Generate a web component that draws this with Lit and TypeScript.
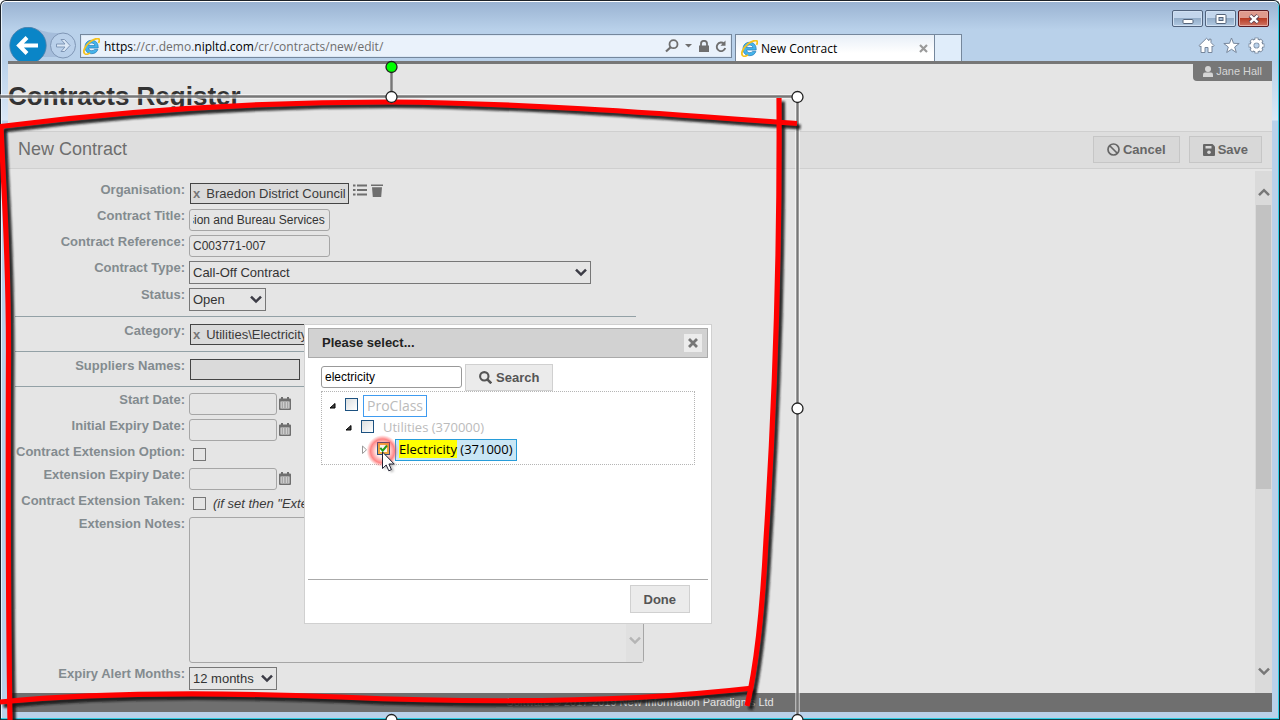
import { LitElement, html, css, svg, nothing } from "lit";
import { customElement, property, query } from "lit/decorators.js";
import { classMap } from "lit/directives/class-map.js";

const ieLogo = html`<svg width="17" height="17" viewBox="0 0 17 17" aria-hidden="true">
  <path d="M15.200 10H5.600c.2 1.800 1.500 2.700 3.200 2.700 1.200 0 2.100-.5 2.600-1.300h3.500c-.9 2.700-3.200 4.300-6.200 4.300-4 0-6.700-2.700-6.700-6.700 0-4 2.700-6.700 6.700-6.700 4.200 0 6.700 3 6.500 7.700zM11.800 7.600C11.700 6 10.500 5 8.700 5 7 5 5.800 6 5.600 7.600z" fill="#45b4ea" stroke="#1f78b8" stroke-width=".7"/>
  <path d="M2 15.900C-.8 13.600 2 8 7 3.900 11 .8 15.400-.4 16.200 1.300c.4 1 .1 2.200-.7 3.600" fill="none" stroke="#f5c21c" stroke-width="1.800"/>
  <path d="M2 15.900c1.300.9 3.200.2 5-1" fill="none" stroke="#f5c21c" stroke-width="1.600"/>
</svg>`;

const chevron = (color: string, up = false) => html`<svg width="12" height="9" viewBox="0 0 12 9" aria-hidden="true">
  <path d=${up ? "M1 7.200L6 2.200l5 5" : "M1 1.600L6 6.600l5-5"} fill="none" stroke=${color} stroke-width="2.500"/>
</svg>`;

const calendar = html`<svg width="12" height="14" viewBox="0 0 12 14" aria-hidden="true">
  <path d="M2 0h2v1.500h4V0h2v1.500h1q1 0 1 1V12q0 1-1 1H1q-1 0-1-1V2.500q0-1 1-1h1z" fill="#6f6f6f"/>
  <path d="M1.500 4.500h9v7h-9z" fill="#e0e0e0"/>
  <path d="M2.500 6h7M2.500 8h7M2.500 10h7" stroke="#6f6f6f" stroke-width="1.200" stroke-dasharray="1.800 .8"/>
</svg>`;

const teeth = Array.from({ length: 8 }, (_, i) => i * 45);

@customElement("browser-chrome")
class BrowserChrome extends LitElement {
  static styles = css`
    :host { display: flex; align-items: flex-end; height: 61px; font: 12px "Open Sans", "Noto Sans", sans-serif; }
    svg { display: block; flex: none; }
    button { padding: 0; border: 0; background: none; }
    .nav { display: flex; width: 72px; flex: none; }
    .address { display: flex; align-items: center; gap: 4px; box-sizing: border-box; flex: 0 1 652px; min-width: 0; height: 24px; margin-bottom: 3px; padding: 0 4px 0 2px; border: 1px solid #75879c; outline: 1px solid #dbe8f6; outline-offset: -2px; background: #eaf2fb; color: #6d6d6d; white-space: nowrap; }
    .url { flex: 1; overflow: hidden; }
    .url b { color: #000; font-weight: 400; }
    .tools { display: flex; align-items: center; gap: 6px; }
    .tab { display: flex; align-items: center; gap: 3px; box-sizing: border-box; width: 200px; height: 27px; margin-left: 3px; padding: 0 6px 0 5px; border: 1px solid #75879c; border-bottom: 0; background: linear-gradient(#e8eff7, #fff 70%); color: #000; white-space: nowrap; }
    .tab span { flex: 1; }
    .stub { box-sizing: border-box; width: 27px; height: 27px; border: 1px solid #75879c; border-width: 1px 1px 0 0; background: #e0edfa; }
    .side { display: flex; flex-direction: column; align-items: flex-end; gap: 10px; margin-left: auto; padding: 0 3px 7px 0; }
    .controls { display: flex; gap: 2px; }
    .control { display: grid; place-items: center; box-sizing: border-box; width: 31px; height: 17px; border: 1px solid #51637d; border-radius: 2px; background: linear-gradient(#c3d6ec 45%, #93adc9 50%, #b1c9e2); box-shadow: inset 0 0 0 1px #d0e0f2; }
    .close { border-color: #5a1a22; background: linear-gradient(#df9a8d 45%, #b83b24 50%, #cf7564); box-shadow: inset 0 0 0 1px #e6aaa0; }
    .links { display: flex; gap: 8px; padding-right: 4px; }
  `;
  render() {
    return html`
      <div class="nav">
        <svg width="72" height="34" viewBox="0 0 72 34" role="img" aria-label="Back and forward">
          <path d="M20 0c12 1 14 6 30 6v24H20z" fill="#a5bddb"/>
          <circle cx="55" cy="18.500" r="12.500" fill="#b9d0ea" stroke="#7f96b5"/>
          <path d="M48.500 17h8.500l-4-4.500h3.500l5.500 6-5.500 6H53l4-4.500h-8.500z" fill="#dbe8f6" stroke="#7f96b5"/>
          <circle cx="20" cy="18.500" r="18.200" fill="#0a85c7" stroke="#4e7fa8" stroke-width=".8"/>
          <path d="M30 18.500H12M19 10.500l-8 8 8 8" fill="none" stroke="#fff" stroke-width="4"/>
        </svg>
      </div>
      <div class="address">
        ${ieLogo}
        <div class="url"><b>https</b>://cr.demo.<b>nipltd.com</b>/cr/contracts/new/edit/</div>
        <div class="tools">
          <svg width="14" height="14" viewBox="0 0 14 14"><circle cx="8.500" cy="5.200" r="4" fill="none" stroke="#6f6f6f" stroke-width="1.800"/><path d="M5.600 8.200L1 12.500" stroke="#6f6f6f" stroke-width="2.200"/></svg>
          <svg width="8" height="4" viewBox="0 0 8 4"><path d="M0 0h7L3.500 3.500z" fill="#6f6f6f"/></svg>
          <svg width="10" height="13" viewBox="0 0 10 13"><path d="M0 5.500h10V12H0z" fill="#6f6f6f"/><path d="M2 6V3.800a3 3 0 016 0V6" fill="none" stroke="#6f6f6f" stroke-width="1.800"/></svg>
          <svg width="12" height="13" viewBox="0 0 12 13"><path d="M9 3.700A4.300 4.300 0 1010.200 8" fill="none" stroke="#6f6f6f" stroke-width="1.900"/><path d="M10.500.5v5.200H5.500z" fill="#6f6f6f"/></svg>
        </div>
      </div>
      <div class="tab">
        ${ieLogo}<span>New Contract</span>
        <button aria-label="Close tab"><svg width="9" height="9" viewBox="0 0 9 9"><path d="M1 1l7 7M8 1L1 8" stroke="#9a9a9a" stroke-width="2.200"/></svg></button>
      </div>
      <div class="stub"></div>
      <div class="side">
        <div class="controls">
          <button class="control" aria-label="Minimise"><svg width="12" height="12" viewBox="0 0 12 12"><rect x="1" y="6.500" width="10" height="4" rx="1" fill="#fff" stroke="#55647a"/></svg></button>
          <button class="control" aria-label="Maximise"><svg width="12" height="12" viewBox="0 0 12 12"><rect x="1" y="1.500" width="10" height="9" rx="1" fill="#fff" stroke="#55647a"/><rect x="4" y="4.500" width="4" height="3" fill="#a8bdd6" stroke="#55647a"/></svg></button>
          <button class="control close" aria-label="Close"><svg width="12" height="12" viewBox="0 0 12 12"><path d="M2 2.500l8 7M10 2.500l-8 7" stroke="#5b4050" stroke-width="4.200"/><path d="M2.300 2.700l7.400 6.600M9.700 2.700L2.300 9.300" stroke="#fff" stroke-width="2.400"/></svg></button>
        </div>
        <div class="links">
          <svg width="17" height="17" viewBox="0 0 17 17"><path d="M8.500 1.300l2.500 2.400V2.200h2v3.400l3 3-1 1.200-1-.8v6.500h-4v-5H7v5H3V9l-1 .8-1-1.200z" fill="#fff" stroke="#76869b"/></svg>
          <svg width="17" height="17" viewBox="0 0 17 17"><path d="M8.500 1l2 5.300 5.700.2-4.500 3.500 1.600 5.500-4.800-3.200-4.800 3.200L5.300 10 .8 6.500l5.700-.2z" fill="#fff" stroke="#76869b"/></svg>
          <svg width="17" height="17" viewBox="0 0 17 17">
            ${teeth.map((a) => svg`<path d="M8.500 .6v4" stroke="#76869b" stroke-width="4" transform="rotate(${a} 8.500 8.500)"/>`)}
            <circle cx="8.500" cy="8.500" r="4.600" fill="none" stroke="#76869b" stroke-width="4.600"/>
            ${teeth.map((a) => svg`<path d="M8.500 1.300v4" stroke="#fff" stroke-width="2.400" transform="rotate(${a} 8.500 8.500)"/>`)}
            <circle cx="8.500" cy="8.500" r="4.500" fill="none" stroke="#fff" stroke-width="2.800"/>
          </svg>
        </div>
      </div>`;
  }
}

@customElement("contract-form")
class ContractForm extends LitElement {
  @query("#title") titleBox!: HTMLInputElement;
  static styles = css`
    :host { display: block; font: 13px "Liberation Sans", Arial, sans-serif; color: #3a3a3a; }
    svg { display: block; flex: none; }
    .form { max-width: 629px; padding: 14px 0 3px 7px; }
    .section { display: grid; gap: 4px; margin-right: 8px; padding: 7px 0 5px; border-bottom: 1px solid #93a1a6; }
    .section:first-child { padding-top: 0; }
    .section:last-child { padding: 6px 0 0; border-bottom: 0; margin-right: 0; }
    .row { display: grid; grid-template-columns: 170px minmax(0, 1fr); gap: 4px; min-height: 22px; }
    .tick { min-height: 19px; }
    .label { justify-self: end; line-height: 14px; font-weight: 700; color: #838b8f; white-space: nowrap; }
    .field { display: flex; align-items: flex-start; gap: 2px; min-width: 0; }
    .tick .field { align-items: center; gap: 7px; padding-left: 4px; white-space: nowrap; font-style: italic; }
    input, select, textarea { box-sizing: border-box; margin: 0; border: 1px solid #a6a6a6; border-radius: 3px; background: #e5e5e5; color: #333; font: 12px "Liberation Sans", Arial, sans-serif; }
    .text { width: 141px; height: 22px; padding: 0 4px 1px 3px; }
    .date { width: 88px; }
    .box { appearance: none; width: 13px; height: 13px; border: 1px solid #777; border-radius: 0; }
    .pick { display: grid; align-items: center; justify-items: end; }
    .pick select { grid-area: 1 / 1; appearance: none; height: 23px; padding: 0 3px; border-color: #777; border-radius: 0; font-size: 13px; width: 100%; }
    .pick svg { grid-area: 1 / 1; margin-right: 4px; pointer-events: none; }
    .wide { width: 402px; }
    .short { width: 77px; }
    .months { width: 88px; }
    .chip { display: flex; align-items: center; gap: 6px; box-sizing: border-box; height: 21px; min-width: 110px; margin: 0 2px 0 1px; padding: 0 2px; border: 1px solid #444; background: #dadada; white-space: nowrap; }
    .cat { min-width: 150px; }
    button { padding: 0; border: 0; background: none; color: #777; font: 700 13px "Liberation Sans", Arial, sans-serif; }
    .act { margin: 1px 2px 0 0; }
    .cal { margin-top: 4px; }
    .notes { display: grid; width: 455px; justify-items: end; }
    .notes textarea { grid-area: 1 / 1; width: 100%; height: 146px; resize: none; }
    .bar { grid-area: 1 / 1; display: flex; align-items: flex-end; justify-content: center; width: 17px; margin: 1px; padding-bottom: 17px; box-sizing: border-box; background: #e0e0e0; }
  `;
  firstUpdated() {
    this.titleBox.scrollLeft = this.titleBox.scrollWidth;
  }
  private row(id: string, label: string, field: unknown, tick = false) {
    return html`<div class=${classMap({ row: true, tick })}><label class="label" for=${id}>${label}</label><div class="field">${field}</div></div>`;
  }
  private date(id: string) {
    return html`<input class="text date" id=${id}><button class="cal" aria-label="Choose date">${calendar}</button>`;
  }
  private select(id: string, size: string, value: string) {
    return html`<div class="pick ${size}"><select id=${id}><option>${value}</option></select>${chevron("#3c3c46")}</div>`;
  }
  render() {
    return html`<form class="form">
      <div class="section">
        ${this.row("org", "Organisation:", html`<div class="chip"><button id="org" type="button">x</button>Braedon District Council</div>
          <button class="act" type="button" aria-label="List"><svg width="14" height="12" viewBox="0 0 14 12"><path d="M4 1.500h10M4 6h10M4 10.500h10M0 1.500h2.500M0 6h2.500M0 10.500h2.500" stroke="#6f6f6f" stroke-width="1.800"/></svg></button>
          <button class="act" type="button" aria-label="Delete"><svg width="12" height="13" viewBox="0 0 12 13"><path d="M0 .5h12V2H0zM1 3.200h10l-.8 9.800H1.800z" fill="#6f6f6f"/></svg></button>`)}
        ${this.row("title", "Contract Title:", html`<input class="text" id="title" .value=${"Electricity Provision and Bureau Services"}>`)}
        ${this.row("ref", "Contract Reference:", html`<input class="text" id="ref" .value=${"C003771-007"}>`)}
        ${this.row("type", "Contract Type:", this.select("type", "wide", "Call-Off Contract"))}
        ${this.row("status", "Status:", this.select("status", "short", "Open"))}
      </div>
      <div class="section">
        ${this.row("category", "Category:", html`<div class="chip cat"><button id="category" type="button">x</button>Utilities\\Electricity</div>`)}
      </div>
      <div class="section">
        ${this.row("suppliers", "Suppliers Names:", html`<output class="chip" id="suppliers"></output>`)}
      </div>
      <div class="section">
        ${this.row("start", "Start Date:", this.date("start"))}
        ${this.row("initial", "Initial Expiry Date:", this.date("initial"))}
        ${this.row("option", "Contract Extension Option:", html`<input class="box" type="checkbox" id="option">`, true)}
        ${this.row("extension", "Extension Expiry Date:", this.date("extension"))}
        ${this.row("taken", "Contract Extension Taken:", html`<input class="box" type="checkbox" id="taken"><span>(if set then "Extension Expiry Date" is used)</span>`, true)}
        ${this.row("notes", "Extension Notes:", html`<div class="notes"><textarea id="notes"></textarea><div class="bar">${chevron("#b5b5b5")}</div></div>`)}
        ${this.row("alert", "Expiry Alert Months:", this.select("alert", "months", "12 months"))}
      </div>
    </form>`;
  }
}

interface Node { name: string; code?: string; depth: number; open: boolean; checked: boolean; look: string; }

@customElement("category-dialog")
class CategoryDialog extends LitElement {
  @property({ attribute: false }) nodes: Node[] = [
    { name: "ProClass", depth: 0, open: true, checked: false, look: "root" },
    { name: "Utilities", code: "(370000)", depth: 1, open: true, checked: false, look: "" },
    { name: "Electricity", code: "(371000)", depth: 2, open: false, checked: true, look: "hit" },
  ];
  static styles = css`
    :host { display: flex; flex-direction: column; box-sizing: border-box; width: 408px; padding: 3px; border: 1px solid #d0d0d0; background: #fff; font: 13px "Liberation Sans", Arial, sans-serif; color: #222; }
    svg { display: block; flex: none; }
    .head { display: flex; align-items: center; justify-content: space-between; box-sizing: border-box; height: 30px; padding: 0 5px 0 13px; border: 1px solid #aaa; background: #d2d2d2; }
    h2 { margin: 0; font-size: 13px; line-height: 28px; }
    .close { display: grid; place-items: center; width: 18px; height: 18px; padding: 0; border: 0; background: #ececec; }
    .body { box-sizing: border-box; min-height: 221px; padding: 6px 13px; }
    .search { display: flex; gap: 3px; }
    .query { box-sizing: border-box; width: 141px; height: 22px; margin-top: 2px; padding: 0 3px; border: 1px solid #999; border-radius: 3px; font: 12px "Liberation Sans", Arial, sans-serif; color: #000; }
    .btn { display: flex; align-items: center; gap: 4px; box-sizing: border-box; height: 27px; padding: 0 13px; border: 1px solid #d0d0d0; background: #ebebeb; color: #555; font: 700 13px "Liberation Sans", Arial, sans-serif; }
    .tree { padding: 3px 0; border: 1px dotted #b5b5b5; font: 13px "Open Sans", "Noto Sans", sans-serif; color: #bbb; }
    .node { display: flex; align-items: center; height: 22px; padding-left: calc(6px + var(--depth) * 16px); }
    .twist { margin-right: 7px; }
    .tick { display: grid; margin: 0 5px 3px 0; }
    .tick > * { grid-area: 1 / 1; }
    .box { appearance: none; box-sizing: border-box; width: 13px; height: 13px; margin: 0; border: 1px solid #1c5180; background: linear-gradient(135deg, #dcdfe0, #fff); }
    .box:checked { background: #fff; box-shadow: inset 0 0 0 2px #f0b040; }
    .mark { position: relative; pointer-events: none; }
    .label { box-sizing: border-box; height: 22px; padding: 0 3px; border: 1px solid transparent; line-height: 19px; white-space: nowrap; }
    .root { border-color: #3f9bf0; font-size: 14px; }
    .hit { border-color: #279cd9; background: #c9e6f5; color: #000; }
    .label mark { background: none; color: inherit; }
    .hit mark { background: #ff0; }
    .foot { display: flex; justify-content: flex-end; padding: 5px 18px 7px; border-top: 1px solid #aaa; }
    .done { height: 28px; }
  `;
  render() {
    return html`
      <div class="head"><h2>Please select...</h2>
        <button class="close" aria-label="Close"><svg width="10" height="10" viewBox="0 0 10 10"><path d="M1 1l8 8M9 1L1 9" stroke="#777" stroke-width="2.800"/></svg></button></div>
      <div class="body">
        <div class="search">
          <input class="query" aria-label="Search text" .value=${"electricity"}>
          <button class="btn"><svg width="13" height="13" viewBox="0 0 13 13"><circle cx="5.300" cy="5.300" r="4.200" fill="none" stroke="#555" stroke-width="2.100"/><path d="M8.300 8.300l4 4" stroke="#555" stroke-width="2.600"/></svg>Search</button>
        </div>
        <div class="tree">${this.nodes.map((n, i) => html`
          <div class="node" style="--depth:${n.depth}">
            <svg class="twist" width="10" height="10" viewBox="0 0 10 10">${n.open
              ? svg`<path d="M7 2.500v4.500H2z" fill="#444" stroke="#000"/>`
              : svg`<path d="M2.500 1v7.500l4-3.700z" fill="#fff" stroke="#999"/>`}</svg>
            <span class="tick"><input class="box" type="checkbox" id="node${i}" .checked=${n.checked}>${n.checked
              ? html`<svg class="mark" width="13" height="13" viewBox="0 0 13 13"><path d="M3.300 5.800l2.400 2.900L10 3.500" fill="none" stroke="#18a018" stroke-width="2"/></svg>` : nothing}</span>
            <label class="label ${n.look}" for="node${i}"><mark>${n.name}</mark>${n.code ? " " + n.code : nothing}</label>
          </div>`)}</div>
      </div>
      <div class="foot"><button class="btn done">Done</button></div>`;
  }
}

@customElement("app-root")
class AppRoot extends LitElement {
  static styles = css`
    :host { display: block; position: relative; overflow: hidden; height: 100vh; font: 13px "Liberation Sans", Arial, sans-serif; }
    svg { display: block; flex: none; }
    .window { display: flex; flex-direction: column; box-sizing: border-box; height: 100%; padding: 0 7px 7px; border: 1px solid #1c2229; border-bottom-color: #14404a; border-radius: 6px 6px 0 0; box-shadow: inset 0 1px #fff, inset -1px 0 #31cfe6, inset 0 -1px #31cfe6, inset 1px 0 #e8f2fb; background: linear-gradient(#9ab3d2, #b9d1ea 30px, #b9d1ea 60px, #dbe8f6 119px, #b9d1ea 120px); }
    browser-chrome { margin-top: -1px; flex: none; position: relative; background: linear-gradient(#1c2229 1px, #fff 1px, #fff 2px, #9ab3d2 2px, #b9d1ea 30px); }
    .page { display: flex; flex-direction: column; flex: 1; min-height: 0; border-top: 3px solid #777; background: #e5e5e5; }
    .head { display: flex; justify-content: space-between; align-items: flex-start; height: 67px; flex: none; }
    h1 { margin: 0; font-size: 26px; line-height: 32px; padding-top: 16px; color: #333; }
    .user { display: flex; align-items: center; gap: 3px; height: 17px; padding: 0 10px; border-radius: 0 0 0 4px; background: #777; color: #d5d5d5; font-size: 11px; line-height: 14px; text-decoration: none; }
    .user svg { margin-bottom: 3px; }
    .user span { margin-bottom: 3px; }
    .bar { display: flex; align-items: center; gap: 9px; box-sizing: border-box; height: 38px; flex: none; padding: 0 10px 1px; border: 1px solid #cfcfcf; border-width: 1px 0; background: #dedede; }
    h2 { flex: 1; margin: 0; font-size: 18px; font-weight: 400; color: #6e6e6e; }
    .btn { display: flex; align-items: center; gap: 3px; height: 27px; padding: 0 13px; border: 1px solid #c6c6c6; background: #d8d8d8; color: #666; font: 700 13px "Liberation Sans", Arial, sans-serif; }
    .pane { display: flex; flex: 1; min-height: 0; }
    contract-form { flex: 1; min-width: 0; overflow: hidden; }
    .scroll { display: flex; flex-direction: column; align-items: center; justify-content: space-between; box-sizing: border-box; width: 17px; margin-top: 2px; padding: 17px 1px; background: #dadada; }
    .thumb { width: 15px; flex: 0 1 284px; margin: 8px 0 auto; background: #c2c2c2; }
    footer { flex: none; height: 19px; background: #6f6f6f; color: #e5e5e5; font-size: 11px; line-height: 19px; text-align: center; }
    category-dialog { position: absolute; left: 304px; top: 324px; }
    .overlay { position: absolute; left: 0; top: 0; pointer-events: none; }
  `;
  render() {
    const strokes = [
      "M0 126.500C130 110 260 102 390 102 530 103 680 115 797 123.500",
      "M779 98C780 250 775 400 766 540 763 600 758 660 747 706",
      "M0 702C90 693 210 692 340 697 500 704 640 701 753 688",
      "M1 126C4 200 8.500 250 8.500 350 8 480 8 600 10 720",
    ];
    return html`
      <div class="window">
        <browser-chrome></browser-chrome>
        <div class="page">
          <div class="head">
            <h1>Contracts Register</h1>
            <a class="user" href="#user"><svg width="10" height="11" viewBox="0 0 10 11"><circle cx="5" cy="3" r="3" fill="#d5d5d5"/><path d="M0 11V8.500Q0 6.500 2 6.500h6q2 0 2 2V11z" fill="#d5d5d5"/></svg><span>Jane Hall</span></a>
          </div>
          <div class="bar">
            <h2>New Contract</h2>
            <button class="btn"><svg width="13" height="13" viewBox="0 0 13 13"><circle cx="6.500" cy="6.500" r="5.500" fill="none" stroke="#666" stroke-width="1.700"/><path d="M2.500 2.500l8 8" stroke="#666" stroke-width="1.700"/></svg>Cancel</button>
            <button class="btn"><svg width="12" height="12" viewBox="0 0 12 12"><path d="M1 0h8.500L12 2.500V11q0 1-1 1H1q-1 0-1-1V1q0-1 1-1z" fill="#666"/><path d="M2.500 2h6v2.500h-6z" fill="#d8d8d8"/><circle cx="6" cy="8.200" r="1.800" fill="#d8d8d8"/></svg>Save</button>
          </div>
          <div class="pane">
            <contract-form></contract-form>
            <div class="scroll">${chevron("#777", true)}<div class="thumb"></div>${chevron("#777")}</div>
          </div>
          <footer>Software © 2017-2019 New Information Paradigms Ltd</footer>
        </div>
      </div>
      <category-dialog></category-dialog>
      <svg class="overlay" width="1280" height="720" viewBox="0 0 1280 720" aria-hidden="true">
        <defs>
          <filter id="soft" x="-5%" y="-5%" width="110%" height="110%"><feGaussianBlur stdDeviation="1"/></filter>
          <radialGradient id="halo"><stop offset="0" stop-color="#f33" stop-opacity="0"/><stop offset=".4" stop-color="#f33" stop-opacity=".1"/><stop offset=".75" stop-color="#f44" stop-opacity=".65"/><stop offset="1" stop-color="#f66" stop-opacity="0"/></radialGradient>
        </defs>
        <path d="M0 96.500H797.500V720" fill="none" stroke="#fff" stroke-opacity=".5" stroke-width="5"/>
        <path d="M0 96.500H797.500V720M391.500 67v30" fill="none" stroke="#777" stroke-width="2.400"/>
        <g fill="none" stroke="#1a1a1a" stroke-opacity=".9" stroke-width="5" transform="translate(3.500 3.500)" filter="url(#soft)">${strokes.map((d) => svg`<path d=${d}/>`)}</g>
        <g fill="none" stroke="#f00" stroke-width="5.200">${strokes.map((d) => svg`<path d=${d}/>`)}</g>
        <g stroke="#222" stroke-width="1.300" fill="#fff">
          <circle cx="391.500" cy="67" r="5.500" fill="#0f0"/>
          ${[[391.5, 97], [797.5, 97], [797.5, 408.5], [391.5, 720], [797.5, 720]].map(([x, y]) => svg`<circle cx=${x} cy=${y} r="5.500"/>`)}
        </g>
        <circle cx="382.500" cy="451" r="16" fill="url(#halo)"/>
        <path d="M384.500 454v16l3.500-3.500 3 6 3-1.500-2.500-5.500h5z" fill="#555" opacity=".4" filter="url(#soft)"/>
        <path d="M382.500 452v16.500l3.700-3.500 2.600 5.800 2.600-1.200-2.500-5.600h5.200z" fill="#fff" stroke="#222233"/>
      </svg>`;
  }
}
